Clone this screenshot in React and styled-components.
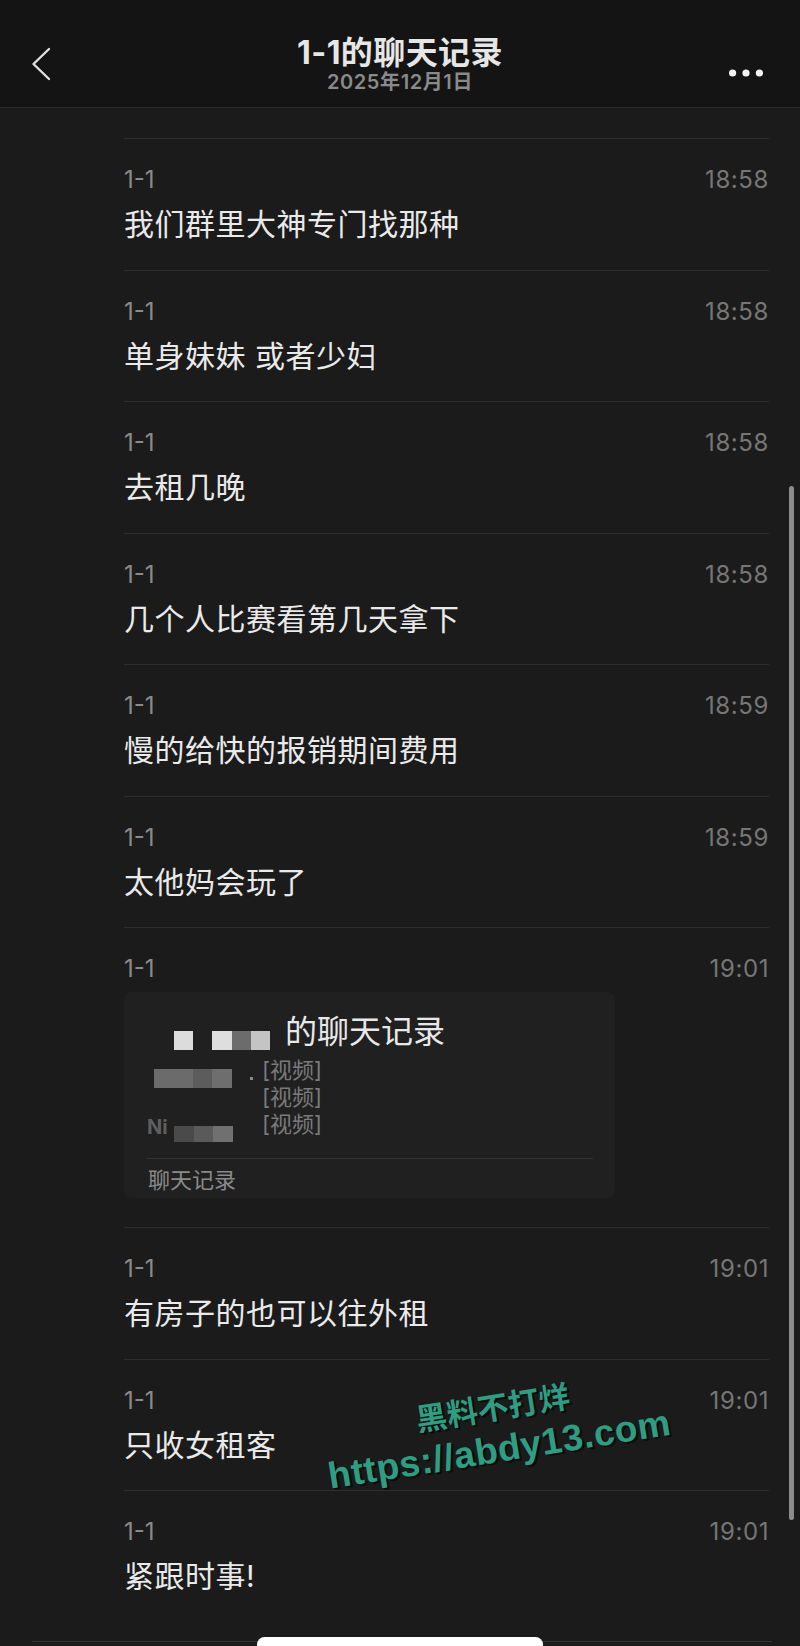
import React from "react";
import styled, { createGlobalStyle } from "styled-components";

const GlobalStyle = createGlobalStyle`
  html, body {
    margin: 0;
    padding: 0;
    background: #1b1b1b;
  }
  body {
    font-family: "Inter", "Noto Sans CJK SC", sans-serif;
    -webkit-font-smoothing: antialiased;
  }
`;

const Page = styled.div`
  position: relative;
  width: 800px;
  height: 1646px;
  overflow: hidden;
  background: #1b1b1b;
  display: flex;
  flex-direction: column;
`;

const Header = styled.header`
  box-sizing: border-box;
  height: 108px;
  flex-shrink: 0;
  background: #141414;
  border-bottom: 1px solid #2b2b2b;
  display: grid;
  grid-template-columns: 100px 1fr 100px;
  align-items: start;
  padding-top: 36px;
`;

const BackButton = styled.div`
  margin: 11px 0 0 31px;
  width: 20px;
  height: 34px;
`;

const MoreButton = styled.div`
  justify-self: end;
  margin: 25px 37px 0 0;
  width: 34px;
  height: 8px;
`;

const TitleBlock = styled.div`
  display: flex;
  flex-direction: column;
  align-items: center;
`;

const Title = styled.div`
  font-family: "Inter", "Noto Sans CJK SC", sans-serif;
  font-size: 32px;
  line-height: 34px;
  font-weight: 700;
  letter-spacing: 0.4px;
  color: #e6e6e6;
`;

const Subtitle = styled.div`
  margin-top: 1px;
  font-size: 20px;
  line-height: 22px;
  font-weight: 600;
  letter-spacing: 0.6px;
  color: #8a8a8a;
`;

const List = styled.div`
  flex: 1;
  overflow: hidden;
  padding: 30px 31px 0 124px;
`;

const Row = styled.div`
  box-sizing: border-box;
  height: ${(p) => p.$height}px;
  border-top: 1px solid #2e2e2e;
  padding-top: 27px;
`;

const Meta = styled.div`
  display: flex;
  justify-content: space-between;
  font-size: 24px;
  line-height: 28px;
`;

const Sender = styled.span`
  color: #8a8a8a;
`;

const Time = styled.span`
  color: #767676;
  letter-spacing: 0.6px;
`;

const Message = styled.div`
  margin-top: 10px;
  font-size: 30px;
  line-height: 40px;
  letter-spacing: 0.5px;
  color: #eaeaea;
`;

const Card = styled.div`
  box-sizing: border-box;
  margin-top: 9px;
  width: 491px;
  height: 206px;
  background: #202020;
  border-radius: 8px;
  padding: 20px 22px 0;
`;

const CardTitle = styled.div`
  display: flex;
  align-items: flex-start;
  height: 40px;
  font-size: 32px;
  line-height: 40px;
  color: #e8e8e8;
`;

const TitleText = styled.span`
  margin-left: 15px;
`;

const Mosaic = styled.div`
  display: flex;
  align-items: flex-start;
  margin-top: ${(p) => p.$top}px;
`;

const Pixel = styled.span`
  display: block;
  flex-shrink: 0;
  width: ${(p) => p.$w}px;
  height: ${(p) => p.$h}px;
  margin-left: ${(p) => p.$gap || 0}px;
  margin-top: ${(p) => p.$dy || 0}px;
  background: ${(p) => p.$c};
`;

const Smudge = styled.span`
  font-size: 20px;
  line-height: 20px;
  font-weight: 700;
  color: #5e5e5e;
  margin-left: 1px;
  margin-top: -9px;
`;

const CardLines = styled.div`
  margin-top: 5px;
`;

const CardLine = styled.div`
  display: grid;
  grid-template-columns: 116px auto;
  align-items: start;
  height: 27px;
`;

const LineText = styled.span`
  font-size: 22px;
  line-height: 27px;
  color: #7a7a7a;
`;

const CardDivider = styled.div`
  margin-top: 20px;
  height: 1px;
  background: #333333;
`;

const CardFooter = styled.div`
  padding-left: 2px;
  margin-top: 6px;
  font-size: 22px;
  line-height: 30px;
  color: #8a8a8a;
`;

const BottomBar = styled.div`
  flex-shrink: 0;
  height: 4px;
  margin: 0 28px 0 32px;
  border-top: 1px solid #333333;
`;

const Scrollbar = styled.div`
  position: absolute;
  right: 6px;
  top: 486px;
  width: 5px;
  height: 1034px;
  border-radius: 3px;
  background: #8c8c8c;
`;

const HomeIndicator = styled.div`
  position: absolute;
  left: 257px;
  bottom: -6px;
  width: 286px;
  height: 15px;
  border-radius: 8px;
  background: #ffffff;
`;

const Watermark = styled.div`
  position: absolute;
  left: 496px;
  top: 1428px;
  transform: translate(-50%, -50%) rotate(-9deg);
  text-align: center;
  white-space: nowrap;
  color: #2f9d82;
  font-weight: 700;
  text-shadow: 2px 2px 0 #0b0b0b, 1px 1px 0 #0b0b0b;
`;

const WatermarkLine = styled.div`
  font-family: ${(p) => (p.$latin ? '"Liberation Sans", "Noto Sans CJK SC", sans-serif' : '"Noto Sans CJK SC", sans-serif')};
  font-size: ${(p) => p.$size}px;
  line-height: 44px;
  letter-spacing: ${(p) => (p.$latin ? 0.5 : 0)}px;
`;

const messages = [
  { time: "18:58", text: "我们群里大神专门找那种" },
  { time: "18:58", text: "单身妹妹 或者少妇" },
  { time: "18:58", text: "去租几晚" },
  { time: "18:58", text: "几个人比赛看第几天拿下" },
  { time: "18:59", text: "慢的给快的报销期间费用" },
  { time: "18:59", text: "太他妈会玩了" },
  { time: "19:01", card: true },
  { time: "19:01", text: "有房子的也可以往外租" },
  { time: "19:01", text: "只收女租客" },
  { time: "19:01", text: "紧跟时事!" },
];

// pixelated bits that hide the forwarded names
const titlePixels = [
  { gap: 28, w: 19, c: "#dcdcdc" },
  { gap: 19, w: 20, c: "#dedede" },
  { w: 19, c: "#6c6c6c" },
  { w: 19, c: "#c4c4c4" },
];

const lines = [
  {
    top: 12,
    pixels: [
      { gap: 8, w: 39, c: "#6b6b6b" },
      { w: 19, c: "#5c5c5c" },
      { w: 20, c: "#6e6e6e" },
      { gap: 18, w: 3, h: 3, dy: 8, c: "#8a8a8a" },
    ],
  },
  { top: 0, pixels: [] },
  {
    top: 15,
    smudge: "Ni",
    pixels: [
      { gap: 6, w: 20, h: 16, c: "#4a4a4a" },
      { w: 19, h: 16, c: "#5a5a5a" },
      { w: 20, h: 16, c: "#707070" },
    ],
  },
];

function ChatCard() {
  return (
    <Card>
      <CardTitle>
        <Mosaic $top={19}>
          {titlePixels.map((p, i) => (
            <Pixel key={i} $gap={p.gap} $w={p.w} $h={19} $c={p.c} />
          ))}
        </Mosaic>
        <TitleText>的聊天记录</TitleText>
      </CardTitle>
      <CardLines>
        {lines.map((line, i) => (
          <CardLine key={i}>
            <Mosaic $top={line.top}>
              {line.smudge && <Smudge>{line.smudge}</Smudge>}
              {line.pixels.map((p, j) => (
                <Pixel key={j} $gap={p.gap} $w={p.w} $h={p.h || 19} $dy={p.dy} $c={p.c} />
              ))}
            </Mosaic>
            <LineText>[视频]</LineText>
          </CardLine>
        ))}
      </CardLines>
      <CardDivider />
      <CardFooter>聊天记录</CardFooter>
    </Card>
  );
}

export default function App() {
  return (
    <>
      <GlobalStyle />
      <Page>
        <Header>
          <BackButton>
            <svg width="20" height="34" viewBox="0 0 20 34" fill="none">
              <path d="M18 2 L2.5 17 L18 32" stroke="#e0e0e0" strokeWidth="2.4" strokeLinecap="round" strokeLinejoin="round" />
            </svg>
          </BackButton>
          <TitleBlock>
            <Title>1-1的聊天记录</Title>
            <Subtitle>2025年12月1日</Subtitle>
          </TitleBlock>
          <MoreButton>
            <svg width="34" height="8" viewBox="0 0 34 8" fill="#f2f2f2">
              <circle cx="3.6" cy="4" r="3.6" />
              <circle cx="17" cy="4" r="3.6" />
              <circle cx="30.4" cy="4" r="3.6" />
            </svg>
          </MoreButton>
        </Header>

        <List>
          {messages.map((m, i) => (
            <Row key={i} $height={m.card ? 300 : 131.5}>
              <Meta>
                <Sender>1-1</Sender>
                <Time>{m.time}</Time>
              </Meta>
              {m.card ? <ChatCard /> : <Message>{m.text}</Message>}
            </Row>
          ))}
        </List>

        <BottomBar />

        <Scrollbar />
        <Watermark>
          <WatermarkLine $size={31}>黑料不打烊</WatermarkLine>
          <WatermarkLine $size={37} $latin>https://abdy13.com</WatermarkLine>
        </Watermark>
        <HomeIndicator />
      </Page>
    </>
  );
}
